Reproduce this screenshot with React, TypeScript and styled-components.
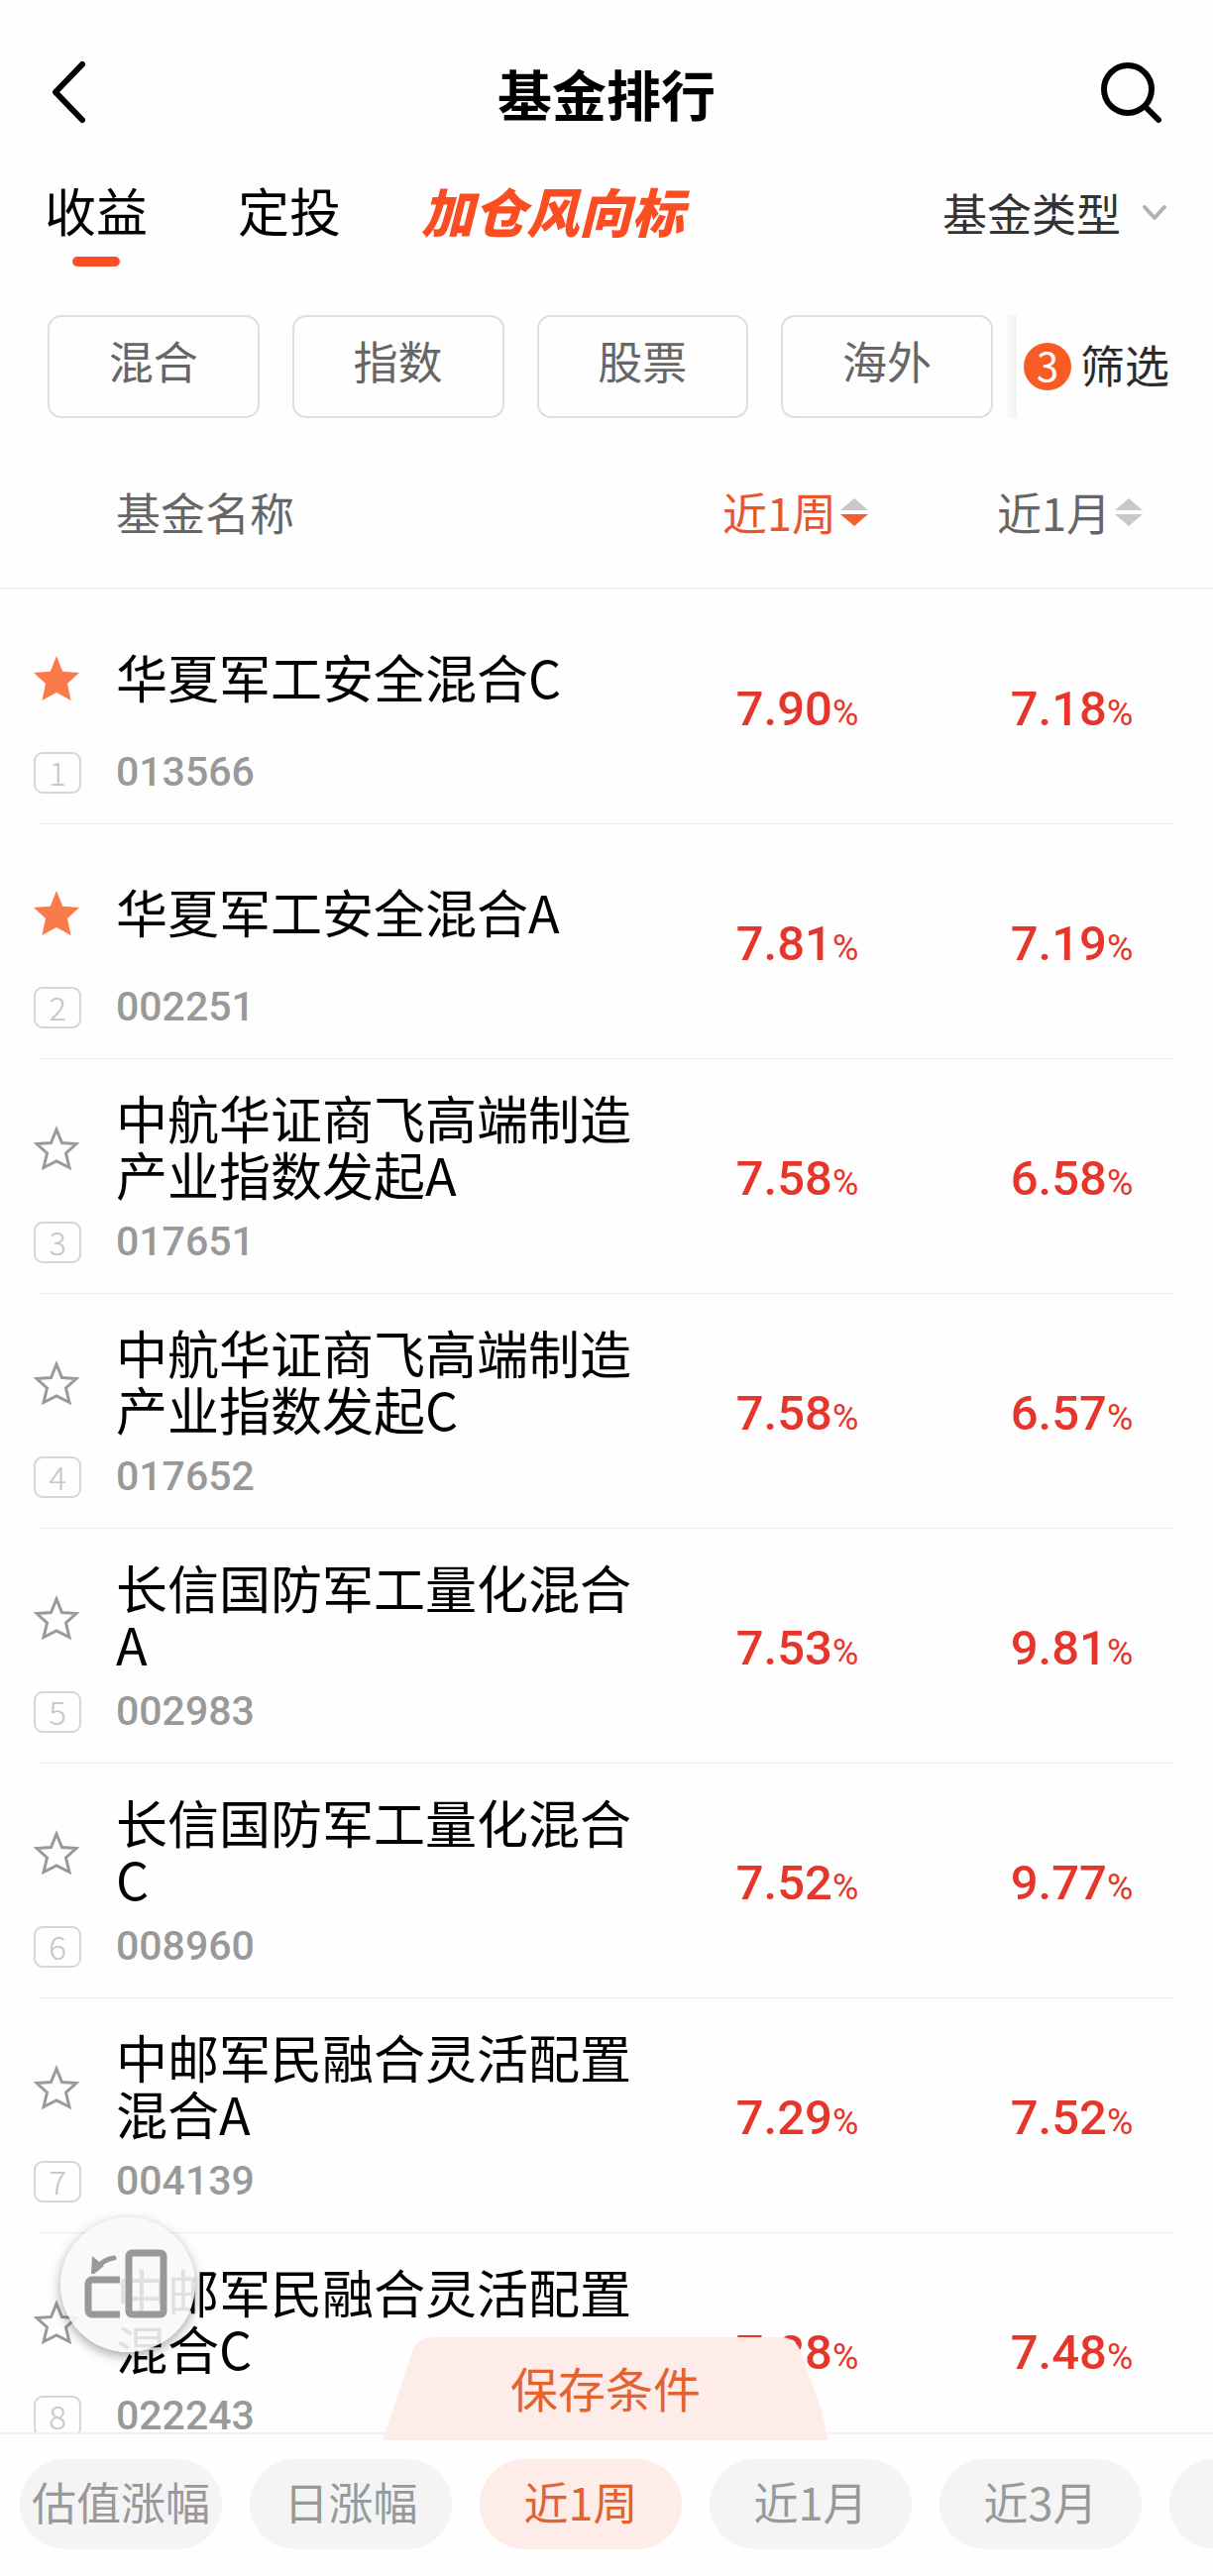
import React, { useState } from "react";
import styled, { createGlobalStyle } from "styled-components";

const GlobalStyle = createGlobalStyle`
  *, *::before, *::after { box-sizing: border-box; }
  body {
    margin: 0;
    background: #fefefe;
    color: #000;
    font-family: "Noto Sans CJK SC", "Noto Sans", sans-serif;
  }
  button, select { font-family: inherit; color: inherit; background: none; border: 0; padding: 0; margin: 0; cursor: pointer; }
`;

const Screen = styled.main`
  display: flex;
  flex-direction: column;
  height: 100vh;
  overflow: hidden;
`;

const TopBar = styled.header`
  display: grid;
  grid-template-columns: 72px 1fr 72px;
  align-items: center;
  flex: none;
  padding: 46px 51px 0;
  height: 140px;
`;

const Title = styled.h1`
  margin: 0;
  font-size: 55px;
  line-height: 80px;
  font-weight: 700;
  text-align: center;
`;

const IconButton = styled.button<{ $end?: boolean }>`
  display: flex;
  justify-content: ${(p) => (p.$end ? "flex-end" : "flex-start")};
`;

const TabBar = styled.nav`
  display: flex;
  align-items: flex-start;
  flex: none;
  height: 178px;
  padding: 34px 46px 0 45px;
`;

const Tab = styled.button<{ $active?: boolean }>`
  display: flex;
  flex-direction: column;
  align-items: center;
  margin-right: 91px;
  font-size: 52px;
  line-height: 76px;
  &::after {
    content: "";
    width: 48px;
    height: 10px;
    margin-top: 9px;
    border-radius: 5px;
    background: ${(p) => (p.$active ? "#fa5124" : "transparent")};
  }
`;

const PromoTab = styled.button`
  margin-left: -10px;
  font-size: 53px;
  line-height: 76px;
  font-weight: 900;
  font-style: italic;
  color: #fb4d22;
`;

const TypePicker = styled.label`
  display: flex;
  align-items: center;
  gap: 20px;
  margin-left: auto;
  height: 82px;
  color: #333;
`;

const TypeSelect = styled.select`
  appearance: none;
  font-size: 45px;
  line-height: 66px;
  outline: none;
`;

const FilterBar = styled.section`
  display: flex;
  align-items: stretch;
  flex: none;
  padding-left: 48px;
`;

const Chips = styled.div`
  display: flex;
  flex: 1;
  min-width: 0;
  gap: 33px;
  padding-right: 12px;
`;

const Chip = styled.button`
  flex: 1;
  height: 104px;
  padding-bottom: 12px;
  border: 2px solid #dedede;
  border-radius: 14px;
  font-size: 45px;
  line-height: 66px;
  color: #666;
`;

const FilterButton = styled.button`
  display: flex;
  align-items: center;
  gap: 9px;
  padding-right: 44px;
  font-size: 45px;
  line-height: 66px;
  color: #2b2b2b;
  &::before {
    content: "";
    align-self: stretch;
    width: 12px;
    margin-right: -2px;
    background: linear-gradient(to right, rgba(0, 0, 0, 0), rgba(0, 0, 0, 0.05));
  }
`;

const FilterLabel = styled.span`
  padding-bottom: 4px;
`;

const CountBadge = styled.span`
  width: 48px;
  height: 48px;
  border-radius: 50%;
  background: #f85c24;
  color: #fff;
  font-size: 40px;
  line-height: 44px;
  text-align: center;
`;

const ListArea = styled.section`
  flex: 1;
  min-height: 0;
  overflow: hidden auto;
  scrollbar-width: none;
`;

const FundTable = styled.table`
  width: 100%;
  table-layout: fixed;
  border-collapse: separate;
  border-spacing: 0;
`;

const MarkCol = styled.col`
  width: 117px;
`;
const WeekCol = styled.col`
  width: 277px;
`;
const MonthCol = styled.col`
  width: 283px;
`;

const HeadCell = styled.th<{ $last?: boolean }>`
  position: sticky;
  top: 0;
  z-index: 1;
  height: 173px;
  padding: 42px ${(p) => (p.$last ? 6 : 0)}px 24px 0;
  background: #fefefe;
  border-bottom: 2px solid #f0f0f0;
  font-size: 45px;
  line-height: 66px;
  font-weight: 400;
  text-align: left;
  color: #666;
`;

const SortButton = styled.button<{ $active?: boolean }>`
  display: flex;
  align-items: center;
  justify-content: center;
  gap: 4px;
  width: 100%;
  font-size: 45px;
  line-height: 66px;
  color: ${(p) => (p.$active ? "#e9562a" : "#666")};
`;

const Row = styled.tr`
  background: linear-gradient(#ececec, #ececec) no-repeat 40px 100% / calc(100% - 79px) 1px;
`;

const Cell = styled.td<{ $last?: boolean }>`
  padding: 30px ${(p) => (p.$last ? 6 : 0)}px 31px 0;
  vertical-align: top;
`;

const MarkStack = styled.div`
  display: flex;
  flex-direction: column;
  align-items: flex-start;
  gap: 17px;
  padding: 3px 0 0 34px;
`;

const StarButton = styled.button`
  display: flex;
  align-items: center;
  height: 114px;
`;

const Rank = styled.span`
  width: 48px;
  height: 42px;
  border: 2px solid #d6d6d6;
  border-radius: 9px;
  font-size: 33px;
  line-height: 36px;
  font-weight: 300;
  text-align: center;
  color: #c4c4c4;
`;

const FundInfo = styled.div`
  display: flex;
  flex-direction: column;
  gap: 18px;
  padding-right: 16px;
`;

const FundName = styled.div`
  display: flex;
  align-items: center;
  min-height: 114px;
  font-size: 52px;
  line-height: 57px;
`;

const FundCode = styled.div`
  font-family: Roboto, "Liberation Sans", sans-serif;
  font-size: 41px;
  line-height: 44px;
  font-weight: 500;
  color: #999;
`;

const Rate = styled.div`
  padding: 63px 0 0 4px;
  font-family: Roboto, "Liberation Sans", sans-serif;
  font-size: 49px;
  line-height: 56px;
  font-weight: 500;
  text-align: center;
  color: #e6352a;
`;

const Percent = styled.span`
  font-size: 36px;
  font-weight: 400;
`;

const BottomBar = styled.footer`
  position: relative;
  flex: none;
  border-top: 2px solid #efefef;
`;

const Periods = styled.div`
  display: flex;
  gap: 28px;
  overflow: hidden;
  padding: 25px 0 27px 20px;
`;

const Pill = styled.button<{ $active?: boolean }>`
  flex: none;
  width: 204px;
  height: 91px;
  padding-bottom: 6px;
  border-radius: 46px;
  background: ${(p) => (p.$active ? "#fdece7" : "#f4f4f4")};
  color: ${(p) => (p.$active ? "#e2632f" : "#999")};
  font-size: 45px;
  line-height: 66px;
  white-space: nowrap;
`;

const SaveButton = styled.button`
  position: absolute;
  left: 50%;
  bottom: 137px;
  width: 450px;
  height: 104px;
  margin-left: -226px;
  font-size: 48px;
  line-height: 100px;
  padding-bottom: 4px;
  color: #e2632f;
`;

const SaveShape = styled.svg`
  position: absolute;
  inset: 0;
  width: 100%;
  height: 100%;
`;

const SaveLabel = styled.span`
  position: relative;
`;

const FloatButton = styled.button`
  position: absolute;
  left: 61px;
  bottom: 226px;
  display: flex;
  align-items: center;
  justify-content: center;
  width: 136px;
  height: 136px;
  padding: 0 4px 2px 0;
  border-radius: 50%;
  background: rgba(248, 248, 248, 0.9);
  box-shadow: 0 4px 12px rgba(0, 0, 0, 0.35);
`;

const BackIcon = () => (
  <svg width="38" height="64" viewBox="0 0 38 64" fill="none" stroke="#000" strokeWidth="6" strokeLinecap="round" strokeLinejoin="round">
    <path d="M32 4 5 32l27 28" />
  </svg>
);

const SearchIcon = () => (
  <svg width="64" height="64" viewBox="0 0 64 64" fill="none" stroke="#000" strokeWidth="6" strokeLinecap="round">
    <circle cx="29" cy="29" r="24" />
    <path d="m47 47 13 13" />
  </svg>
);

const ChevronIcon = () => (
  <svg width="26" height="18" viewBox="0 0 26 18" fill="none" stroke="#b0b0b0" strokeWidth="4" strokeLinecap="round" strokeLinejoin="round">
    <path d="m3 3 10 11L23 3" />
  </svg>
);

const SortIcon = ({ active }: { active?: boolean }) => (
  <svg width="28" height="28" viewBox="0 0 28 28">
    <path d="M0 12 14 0l14 12z" fill="#c8c8c8" />
    <path d="M0 16h28L14 28z" fill={active ? "#f4602a" : "#c8c8c8"} />
  </svg>
);

const StarIcon = ({ filled }: { filled: boolean }) => (
  <svg width="46" height="46" viewBox="0 0 46 46" fill={filled ? "#fb7a4c" : "none"} stroke={filled ? "none" : "#999"} strokeWidth="3">
    <path
      d={
        filled
          ? "M23 0l6.200 15.800L46 17 34 28l3.600 17L23 37 8.400 45 12 28 0 17l16.800-1.200z"
          : "M23 4l5.500 13.500L43 18.500 32.500 28l3.500 14.500L23 36 10 42.500 13.500 28 3 18.500l14.500-1z"
      }
    />
  </svg>
);

const RotateIcon = () => (
  <svg width="84" height="70" viewBox="0 0 84 70" fill="none" stroke="#999" strokeWidth="7" strokeLinejoin="round">
    <rect x="45" y="4" width="35" height="62" rx="3" />
    <path d="M36 31H8a4 4 0 0 0-4 4v27a4 4 0 0 0 4 4h28" />
    <path d="M30 9c-7 1-13 4-18 11" strokeWidth="5" strokeLinecap="round" />
    <path d="M8 7l12 10-10 8H7z" fill="#999" stroke="none" />
  </svg>
);

interface Fund {
  name: string;
  code: string;
  week: string;
  month: string;
  starred?: boolean;
}

const FUNDS: Fund[] = [
  { name: "华夏军工安全混合C", code: "013566", week: "7.90", month: "7.18", starred: true },
  { name: "华夏军工安全混合A", code: "002251", week: "7.81", month: "7.19", starred: true },
  { name: "中航华证商飞高端制造产业指数发起A", code: "017651", week: "7.58", month: "6.58" },
  { name: "中航华证商飞高端制造产业指数发起C", code: "017652", week: "7.58", month: "6.57" },
  { name: "长信国防军工量化混合A", code: "002983", week: "7.53", month: "9.81" },
  { name: "长信国防军工量化混合C", code: "008960", week: "7.52", month: "9.77" },
  { name: "中邮军民融合灵活配置混合A", code: "004139", week: "7.29", month: "7.52" },
  { name: "中邮军民融合灵活配置混合C", code: "022243", week: "7.28", month: "7.48" },
];

const CATEGORIES = ["混合", "指数", "股票", "海外"];
const PERIODS = ["估值涨幅", "日涨幅", "近1周", "近1月", "近3月", ""];

export default function App() {
  const [period, setPeriod] = useState("近1周");
  const [starred, setStarred] = useState(() => FUNDS.filter((f) => f.starred).map((f) => f.code));
  const toggleStar = (code: string) =>
    setStarred((list) => (list.includes(code) ? list.filter((c) => c !== code) : [...list, code]));

  return (
    <Screen>
      <GlobalStyle />
      <TopBar>
        <IconButton aria-label="返回"><BackIcon /></IconButton>
        <Title>基金排行</Title>
        <IconButton $end aria-label="搜索"><SearchIcon /></IconButton>
      </TopBar>

      <TabBar>
        <Tab $active>收益</Tab>
        <Tab>定投</Tab>
        <PromoTab>加仓风向标</PromoTab>
        <TypePicker>
          <TypeSelect aria-label="基金类型">
            <option>基金类型</option>
          </TypeSelect>
          <ChevronIcon />
        </TypePicker>
      </TabBar>

      <FilterBar>
        <Chips>
          {CATEGORIES.map((c) => <Chip key={c}>{c}</Chip>)}
        </Chips>
        <FilterButton>
          <CountBadge>3</CountBadge>
          <FilterLabel>筛选</FilterLabel>
        </FilterButton>
      </FilterBar>

      <ListArea>
        <FundTable>
          <colgroup>
            <MarkCol />
            <col />
            <WeekCol />
            <MonthCol />
          </colgroup>
          <thead>
            <tr>
              <HeadCell aria-label="自选" />
              <HeadCell>基金名称</HeadCell>
              <HeadCell><SortButton $active>近1周<SortIcon active /></SortButton></HeadCell>
              <HeadCell $last><SortButton>近1月<SortIcon /></SortButton></HeadCell>
            </tr>
          </thead>
          <tbody>
            {FUNDS.map((fund, i) => (
              <Row key={fund.code}>
                <Cell>
                  <MarkStack>
                    <StarButton aria-label="加入自选" onClick={() => toggleStar(fund.code)}>
                      <StarIcon filled={starred.includes(fund.code)} />
                    </StarButton>
                    <Rank>{i + 1}</Rank>
                  </MarkStack>
                </Cell>
                <Cell>
                  <FundInfo>
                    <FundName>{fund.name}</FundName>
                    <FundCode>{fund.code}</FundCode>
                  </FundInfo>
                </Cell>
                <Cell><Rate>{fund.week}<Percent>%</Percent></Rate></Cell>
                <Cell $last><Rate>{fund.month}<Percent>%</Percent></Rate></Cell>
              </Row>
            ))}
          </tbody>
        </FundTable>
      </ListArea>

      <BottomBar>
        <Periods>
          {PERIODS.map((p) => (
            <Pill key={p} $active={p === period} aria-label={p || "更多"} onClick={() => p && setPeriod(p)}>{p}</Pill>
          ))}
        </Periods>
        <SaveButton>
          <SaveShape viewBox="0 0 450 104" preserveAspectRatio="none" aria-hidden="true">
            <path d="M0 104 30 14Q35 0 54 0H402Q418 0 423 18L442 70 450 104z" fill="#fdece8" />
          </SaveShape>
          <SaveLabel>保存条件</SaveLabel>
        </SaveButton>
        <FloatButton aria-label="旋转屏幕"><RotateIcon /></FloatButton>
      </BottomBar>
    </Screen>
  );
}
